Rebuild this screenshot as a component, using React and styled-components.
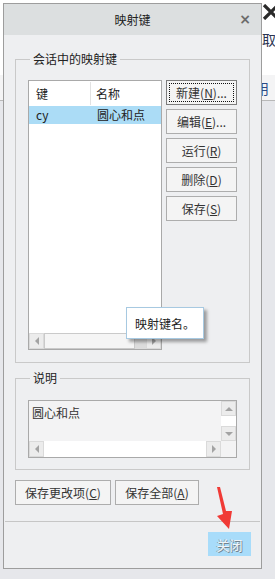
import React from "react";
import styled, { createGlobalStyle } from "styled-components";

const GlobalStyle = createGlobalStyle`
  html, body {
    margin: 0;
    padding: 0;
    background: #e6e7eb;
  }
  body {
    font-family: "Noto Sans CJK SC", "Noto Sans", sans-serif;
    font-size: 12px;
    color: #222;
  }
`;

const Screen = styled.div`
  position: relative;
  width: 275px;
  height: 579px;
  overflow: hidden;
  background: #e6e7eb;
`;

/* the application window behind the dialog */
const AppToolbar = styled.div`
  height: 75px;
  background: #fff;
  padding-left: 262px;
  display: flex;
  flex-direction: column;
  gap: 10px;
  padding-top: 4px;
  box-sizing: border-box;
`;

const AppLabel = styled.span`
  font-size: 14px;
  line-height: 18px;
  color: ${(p) => p.$color || "#2b3450"};
  white-space: nowrap;
`;

const AppRibbon = styled.div`
  height: 25px;
  background: #f4f4f5;
  border-bottom: 1px solid #b8b8b8;
  padding-left: 241px;
  display: flex;
  align-items: center;
`;

const Dialog = styled.div`
  position: absolute;
  left: 3px;
  top: 3px;
  width: 259px;
  height: 566px;
  box-sizing: border-box;
  border: 1px solid #9d9d9d;
  background: #eeeff1;
  display: flex;
  flex-direction: column;
`;

const TitleBar = styled.div`
  height: 31px;
  flex: none;
  background: #dcdfe0;
  display: flex;
  align-items: center;
  justify-content: center;
  position: relative;
  font-size: 12px;
  color: #222;
`;

const CloseX = styled.span`
  position: absolute;
  right: 10px;
  top: 7px;
  font-family: "DejaVu Sans", sans-serif;
  font-size: 14px;
  font-weight: bold;
  color: #6c6c6c;
`;

const Body = styled.div`
  padding: 0 11px;
  display: flex;
  flex-direction: column;
`;

const GroupBox = styled.fieldset`
  margin: ${(p) => p.$mt}px 0 0;
  padding: ${(p) => p.$pt}px 12px ${(p) => p.$pb}px;
  border: 1px solid #c9c9c9;
  min-width: 0;
`;

const GroupTitle = styled.legend`
  margin-left: 2px;
  padding: 0 3px;
  font-size: 12px;
  line-height: 16px;
  color: #222;
`;

const SessionRow = styled.div`
  display: flex;
  gap: 4px;
  align-items: flex-start;
`;

const KeyList = styled.div`
  width: 134px;
  height: 270px;
  box-sizing: border-box;
  border: 1px solid #a9a9a9;
  background: #fff;
  display: flex;
  flex-direction: column;
`;

const ListHeader = styled.div`
  height: 25px;
  display: grid;
  grid-template-columns: 62px 1fr;
  align-items: stretch;
`;

const HeaderCell = styled.div`
  display: flex;
  align-items: center;
  padding-left: ${(p) => (p.$first ? 7 : 5)}px;
  border-right: ${(p) => (p.$first ? "1px solid #e2e2e2" : "none")};
  margin: 1px 0;
  color: #222;
`;

const ListRow = styled.div`
  height: 18px;
  display: grid;
  grid-template-columns: 62px 1fr;
  align-items: center;
  background: ${(p) => (p.$selected ? "#abdcf6" : "transparent")};
`;

const RowCell = styled.div`
  padding-left: ${(p) => (p.$first ? 7 : 6)}px;
  line-height: 18px;
  color: #222;
`;

const ListSpacer = styled.div`
  flex: 1;
`;

const HScroll = styled.div`
  height: 16px;
  flex: none;
  display: flex;
  background: #fff;
`;

const ScrollBtn = styled.div`
  width: 15px;
  height: ${(p) => p.$h || 16}px;
  box-sizing: border-box;
  border: 1px solid #dadada;
  background: #ececec;
  display: flex;
  align-items: center;
  justify-content: center;
  flex: none;
`;

const Thumb = styled.div`
  width: 91px;
  box-sizing: border-box;
  border: 1px solid #cacaca;
  background: #f5f5f5;
  flex: none;
`;

const PressedTrack = styled.div`
  flex: 1;
  background: #dcdcdc;
`;

const Track = styled.div`
  flex: 1;
  background: #fff;
`;

const Tri = styled.span`
  width: 0;
  height: 0;
  border-style: solid;
  border-color: transparent;
  ${(p) =>
    p.$dir === "left"
      ? "border-width: 4px 4px 4px 0; border-right-color: #a3a3a3;"
      : p.$dir === "right"
      ? "border-width: 4px 0 4px 4px; border-left-color: #a3a3a3;"
      : p.$dir === "up"
      ? "border-width: 0 4px 4px 4px; border-bottom-color: #a3a3a3;"
      : "border-width: 4px 4px 0 4px; border-top-color: #a3a3a3;"}
`;

const ButtonColumn = styled.div`
  display: flex;
  flex-direction: column;
  gap: 4px;
`;

const Button = styled.button`
  width: ${(p) => p.$w || 71}px;
  height: 25px;
  padding: 0;
  box-sizing: border-box;
  border: 1px solid ${(p) => (p.$focused ? "#7c7c7c" : "#adadad")};
  background: #f4f4f4;
  font-family: "Noto Sans CJK SC", "Noto Sans", sans-serif;
  font-size: 12px;
  color: #333;
  outline: ${(p) => (p.$focused ? "1px dotted #111" : "none")};
  outline-offset: -4px;
  u {
    text-decoration: underline;
    text-underline-offset: 1px;
  }
`;

const NoteBox = styled.div`
  height: 58px;
  box-sizing: border-box;
  border: 1px solid #a9a9a9;
  background: #f3f3f4;
  display: grid;
  grid-template-columns: 1fr 15px;
  grid-template-rows: 40px 16px;
`;

const NoteText = styled.div`
  padding: 3px 0 0 3px;
  font-size: 12px;
  color: #333;
`;

const VScroll = styled.div`
  display: flex;
  flex-direction: column;
  background: #fff;
`;

const Corner = styled.div`
  background: #f3f3f4;
`;

const ActionRow = styled.div`
  margin-top: 10px;
  display: flex;
  gap: 4px;
`;

const Separator = styled.div`
  margin: 16px 1px 0;
  height: 1px;
  background: #c6c6c6;
`;

const Footer = styled.div`
  padding: 10px 10px 0 0;
  display: flex;
  justify-content: flex-end;
`;

const CloseButton = styled.div`
  width: 43px;
  height: 24px;
  background: #a8dcfa;
  display: flex;
  align-items: center;
  justify-content: center;
  font-size: 13px;
  color: #eef5fa;
  text-shadow: 1px 1px 0 #74848f, -1px 0 0 #92a2ad;
`;

const Tooltip = styled.div`
  position: absolute;
  left: 126px;
  top: 307px;
  width: 78px;
  height: 32px;
  box-sizing: border-box;
  border: 1px solid #a7c9e1;
  background: #fff;
  box-shadow: 3px 3px 3px rgba(0, 0, 0, 0.35);
  display: flex;
  align-items: center;
  padding-left: 8px;
  font-size: 12px;
  color: #222;
`;

const Pointer = styled.svg`
  position: absolute;
  left: 214px;
  top: 485px;
  pointer-events: none;
`;

export default function App() {
  return (
    <>
      <GlobalStyle />
      <Screen>
        <AppToolbar>
          <svg width="18" height="16" viewBox="0 0 18 16">
            <path d="M2 1 L16 15 M16 1 L2 15" stroke="#2a2a2a" strokeWidth="3.2" />
          </svg>
          <AppLabel>取消</AppLabel>
        </AppToolbar>
        <AppRibbon>
          <AppLabel $color="#2c4a86">应用</AppLabel>
        </AppRibbon>

        <Dialog>
          <TitleBar>
            映射键
            <CloseX>×</CloseX>
          </TitleBar>
          <Body>
            <GroupBox $mt={16} $pt={13} $pb={12}>
              <GroupTitle>会话中的映射键</GroupTitle>
              <SessionRow>
                <KeyList>
                  <ListHeader>
                    <HeaderCell $first>键</HeaderCell>
                    <HeaderCell>名称</HeaderCell>
                  </ListHeader>
                  <ListRow $selected>
                    <RowCell $first>cy</RowCell>
                    <RowCell>圆心和点</RowCell>
                  </ListRow>
                  <ListSpacer />
                  <HScroll>
                    <ScrollBtn><Tri $dir="left" /></ScrollBtn>
                    <Thumb />
                    <PressedTrack />
                    <ScrollBtn><Tri $dir="right" /></ScrollBtn>
                  </HScroll>
                </KeyList>
                <ButtonColumn>
                  <Button $focused>新建(<u>N</u>)...</Button>
                  <Button>编辑(<u>E</u>)...</Button>
                  <Button>运行(<u>R</u>)</Button>
                  <Button>删除(<u>D</u>)</Button>
                  <Button>保存(<u>S</u>)</Button>
                </ButtonColumn>
              </SessionRow>
            </GroupBox>

            <GroupBox $mt={7} $pt={14} $pb={11}>
              <GroupTitle>说明</GroupTitle>
              <NoteBox>
                <NoteText>圆心和点</NoteText>
                <VScroll>
                  <ScrollBtn $h={15}><Tri $dir="up" /></ScrollBtn>
                  <Track />
                  <ScrollBtn $h={15}><Tri $dir="down" /></ScrollBtn>
                </VScroll>
                <HScroll>
                  <ScrollBtn><Tri $dir="left" /></ScrollBtn>
                  <Track />
                  <ScrollBtn><Tri $dir="right" /></ScrollBtn>
                </HScroll>
                <Corner />
              </NoteBox>
            </GroupBox>

            <ActionRow>
              <Button $w={96}>保存更改项(<u>C</u>)</Button>
              <Button $w={84}>保存全部(<u>A</u>)</Button>
            </ActionRow>
          </Body>
          <Separator />
          <Footer>
            <CloseButton>关闭</CloseButton>
          </Footer>
        </Dialog>

        <Tooltip>映射键名。</Tooltip>

        <Pointer width="22" height="48" viewBox="0 0 22 48">
          <polygon points="3,2 6,2 12,26 18,26 15,44 3,31 9,29" fill="#f03a36" />
        </Pointer>
      </Screen>
    </>
  );
}
